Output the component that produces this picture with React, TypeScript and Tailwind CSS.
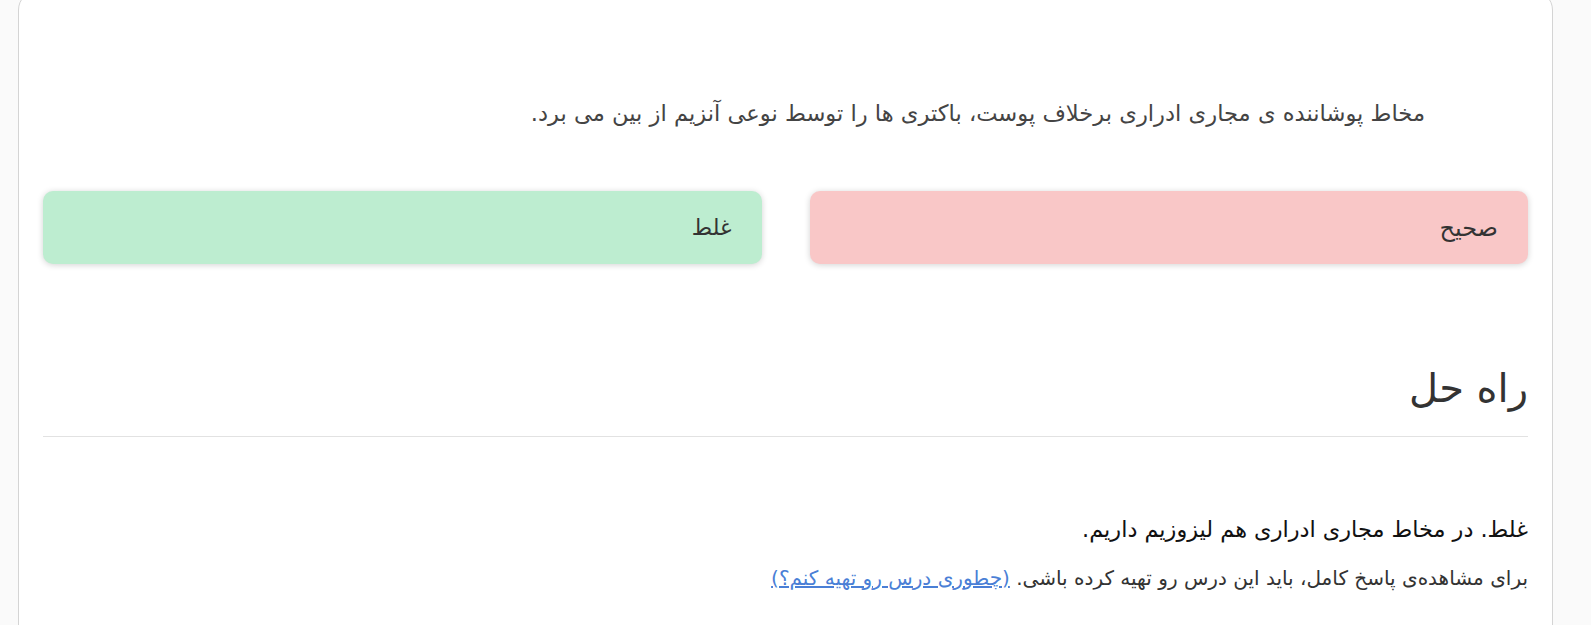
const App = () => {
  return (
    <div className="min-h-[625px] bg-[#fafafa] overflow-hidden font-['DejaVu_Sans',sans-serif]">
      <div
        dir="rtl"
        className="-mt-[10px] ml-[18px] mr-[38px] min-h-[660px] bg-white border border-[#d4d4d4] rounded-t-[20px] px-[24px] pt-[106px]"
      >
        <p className="pr-[103px] text-[22.6px] leading-[32px] text-[#444]">
          مخاط پوشاننده ی مجاری ادراری برخلاف پوست، باکتری ها را توسط نوعی آنزیم از بین می برد.
        </p>

        <div className="grid grid-cols-2 gap-[48px] mt-[62px]">
          <div className="h-[73px] flex items-center px-[30px] rounded-[10px] bg-[#f9c7c7] shadow-[0_1px_6px_rgba(0,0,0,0.18)] text-[24px] text-[#333]">
            صحیح
          </div>
          <div className="h-[73px] flex items-center px-[30px] rounded-[10px] bg-[#bdedd0] shadow-[0_1px_6px_rgba(0,0,0,0.18)] text-[22px] text-[#333]">
            غلط
          </div>
        </div>

        <h2 className="mt-[100px] text-[40px] leading-[48px] text-[#333]">راه حل</h2>
        <hr className="mt-[24px] border-t border-[#e2e2e2]" />

        <p className="mt-[76px] text-[22.4px] leading-[32px] text-[#111]">
          غلط. در مخاط مجاری ادراری هم لیزوزیم داریم.
        </p>
        <p className="mt-[18px] text-[20px] leading-[30px] text-[#333]">
          برای مشاهده‌ی پاسخ کامل، باید این درس رو تهیه کرده باشی.{" "}
          <a href="#" className="text-[#4a7fd6] underline">
            (چطوری درس رو تهیه کنم؟)
          </a>
        </p>
      </div>
    </div>
  );
};

export default App;
